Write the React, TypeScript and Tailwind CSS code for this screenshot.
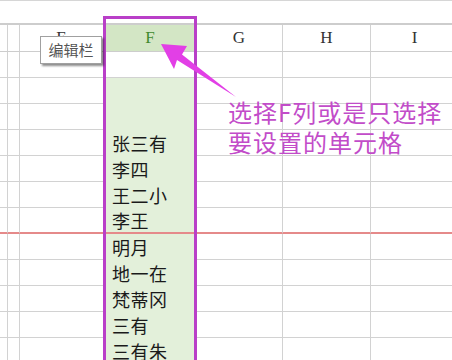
import React from "react";

const W = ["w-[8px]", "w-[12px]", "w-[84px]", "w-[92px]", "w-[87px]", "w-[88px]", "w-[88px]"];
const names: Record<number, string> = {
  4: "张三有",
  5: "李四",
  6: "王二小",
  7: "李王",
  8: "明月",
  9: "地一在",
  10: "梵蒂冈",
  11: "三有",
  12: "三有朱",
};

function Row({ i }: { i: number }) {
  const red = i === 7;
  const b = red ? "border-b-2 border-b-[#e58a8a]" : "border-b border-b-[#d2d2d2]";
  return (
    <div className="flex h-[26px] shrink-0">
      {W.map((w, c) => {
        if (c === 3) {
          const fc =
            i === 1
              ? "bg-white border-l-2 border-l-[#5a5a5a] border-b border-b-[#d2d2d2]"
              : red
              ? "bg-[#e3f0da] border-b-2 border-b-[#e58a8a]"
              : "bg-[#e3f0da]";
          return (
            <div key={c} className={`${w} shrink-0 box-border ${fc} flex items-center pl-[8px] text-[18px] tracking-[0.5px] leading-none text-[#1a1a1a]`}>
              {names[i] ?? ""}
            </div>
          );
        }
        return <div key={c} className={`${w} shrink-0 box-border border-r border-r-[#d2d2d2] ${b}`} />;
      })}
    </div>
  );
}

export default function App() {
  const letters = ["", "", "E", "F", "G", "H", "I"];
  return (
    <div className="relative w-[452px] h-[360px] overflow-hidden bg-white font-['Noto_Sans_CJK_SC',sans-serif]">
      <div className="h-[23px] border-t border-t-[#d6d6d6]" />
      <div className="flex h-[29px] shrink-0 border-t-2 border-t-[#cdcdcd]">
        {W.map((w, c) => (
          <div
            key={c}
            className={`${w} shrink-0 box-border border-b border-b-[#cdcdcd] ${
              c === 3 ? "bg-[#d3e6c5] text-[#3f8a2e]" : "border-r border-r-[#d2d2d2] text-[#333]"
            } flex items-center justify-center font-['Liberation_Serif',serif] text-[17px]`}
          >
            {letters[c]}
          </div>
        ))}
      </div>
      {[1, 2, 3, 4, 5, 6, 7, 8, 9, 10, 11, 12].map((i) => (
        <Row key={i} i={i} />
      ))}

      {/* selection frame */}
      <div className="absolute left-[103px] top-[16px] w-[94px] h-[360px] border-[3px] border-[#b93fc8] pointer-events-none" />

      {/* tooltip */}
      <div className="absolute left-[40px] top-[36px] w-[62px] h-[28px] bg-white border border-[#a0a0a0] shadow-[2px_2px_2px_rgba(0,0,0,0.45)] flex items-center justify-center text-[15px] text-[#555]">
        编辑栏
      </div>

      {/* arrow */}
      <svg className="absolute left-0 top-0" width="452" height="360" viewBox="0 0 452 360">
        <polygon
          points="161,44 187,46 182,54.5 236,97 177,60 174,69"
          fill="#e23fe6"
        />
      </svg>

      {/* annotation */}
      <div className="absolute left-[228px] top-[97px] text-[24px] tracking-[1px] leading-[30px] text-[#c24cc9] whitespace-nowrap">
        <div>选择F列或是只选择</div>
        <div>要设置的单元格</div>
      </div>
    </div>
  );
}
